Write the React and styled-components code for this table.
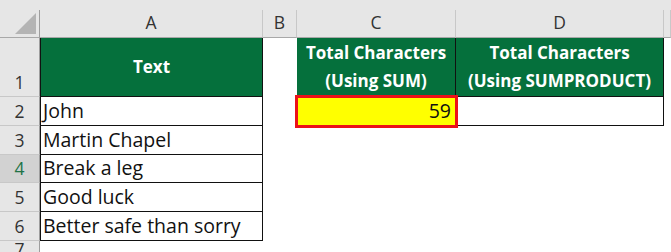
import React from "react";
import styled, { createGlobalStyle } from "styled-components";

const GlobalStyle = createGlobalStyle`
  html, body {
    margin: 0;
    padding: 0;
    background: #fff;
  }
  body {
    font-family: "Open Sans", "Liberation Sans", sans-serif;
    overflow: hidden;
  }
`;

const GREEN = "#05703c";

const Sheet = styled.div`
  display: grid;
  grid-template-columns: 40px 223px 34px 159px 208px 1fr;
  grid-template-rows: 10px 28px 59px 29px 29px 28px 29px 29px 1fr;
  width: 671px;
  height: 252px;
  overflow: hidden;
`;

const TopStrip = styled.div`
  grid-column: 1 / -1;
  background: #e6e6e6;
`;

const Corner = styled.div`
  background: #e6e6e6;
  border-right: 1px solid #9e9e9e;
  border-bottom: 1px solid #a8a8a8;
  display: flex;
  align-items: flex-end;
  justify-content: flex-end;
  padding: 0 3px 3px 0;
`;

const ColHead = styled.div`
  background: #e6e6e6;
  border-right: 1px solid #c8c8c8;
  border-bottom: 1px solid #a8a8a8;
  color: #333;
  font-size: 17.5px;
  line-height: 1;
  display: flex;
  justify-content: center;
  align-items: center;
  padding-bottom: 2px;
`;

const RowHead = styled.div`
  background: ${({ $active }) => ($active ? "#d2d2d2" : "#e6e6e6")};
  color: ${({ $active }) => ($active ? "#217346" : "#333")};
  border-bottom: 1px solid #c8c8c8;
  border-right: 1px solid #9e9e9e;
  font-size: 17.5px;
  line-height: 1;
  display: flex;
  justify-content: center;
  align-items: flex-end;
  padding-bottom: 5px;
`;

const Cell = styled.div`
  background: ${({ $fill }) => $fill || "#fff"};
  color: #111;
  font-size: 19.5px;
  line-height: 1;
  display: flex;
  align-items: flex-end;
  justify-content: ${({ $align }) => ($align === "right" ? "flex-end" : "flex-start")};
  padding: 0 4px 5px 2px;
  white-space: nowrap;
  border-left: ${({ $left }) => ($left ? "1px solid #111" : "none")};
  border-right: ${({ $boxed }) => ($boxed ? "1px solid #111" : "none")};
  border-bottom: ${({ $boxed }) => ($boxed ? "1px solid #111" : "none")};
  ${({ $marked }) =>
    $marked &&
    `
    position: relative;
    z-index: 1;
    outline: 3px solid #ec1118;
    outline-offset: -1px;
  `}
`;

const Title = styled.div`
  background: ${GREEN};
  color: #fff;
  font-weight: 700;
  font-size: 17px;
  line-height: 28px;
  text-align: center;
  white-space: nowrap;
  display: flex;
  flex-direction: column;
  justify-content: center;
  border-left: ${({ $left }) => ($left ? "1px solid #111" : "none")};
  border-right: 1px solid #111;
  border-bottom: 1px solid #111;
`;

const Blank = styled.div`
  background: #fff;
`;

const SelectTriangle = () => (
  <svg width="21" height="21" viewBox="0 0 21 21">
    <polygon points="21,0 21,21 0,21" fill="#b4b4b4" />
  </svg>
);

const items = ["John", "Martin Chapel", "Break a leg", "Good luck", "Better safe than sorry"];

export default function App() {
  return (
    <>
      <GlobalStyle />
      <Sheet>
        <TopStrip />

        <Corner>
          <SelectTriangle />
        </Corner>
        {["A", "B", "C", "D", ""].map((c, i) => (
          <ColHead key={i}>{c}</ColHead>
        ))}

        <RowHead>1</RowHead>
        <Title $left>Text</Title>
        <Blank />
        <Title>
          <span>Total Characters</span>
          <span>(Using SUM)</span>
        </Title>
        <Title>
          <span>Total Characters</span>
          <span>(Using SUMPRODUCT)</span>
        </Title>
        <Blank />

        {items.map((text, i) => {
          const row = i + 2;
          return (
            <React.Fragment key={row}>
              <RowHead $active={row === 4}>{row}</RowHead>
              <Cell $boxed $left>
                {text}
              </Cell>
              <Blank />
              {row === 2 ? (
                <>
                  <Cell $fill="#ffff00" $align="right" $boxed $marked>
                    59
                  </Cell>
                  <Cell $boxed />
                </>
              ) : (
                <>
                  <Blank />
                  <Blank />
                </>
              )}
              <Blank />
            </React.Fragment>
          );
        })}

        <RowHead>7</RowHead>
        <Blank />
        <Blank />
        <Blank />
        <Blank />
        <Blank />
      </Sheet>
    </>
  );
}
